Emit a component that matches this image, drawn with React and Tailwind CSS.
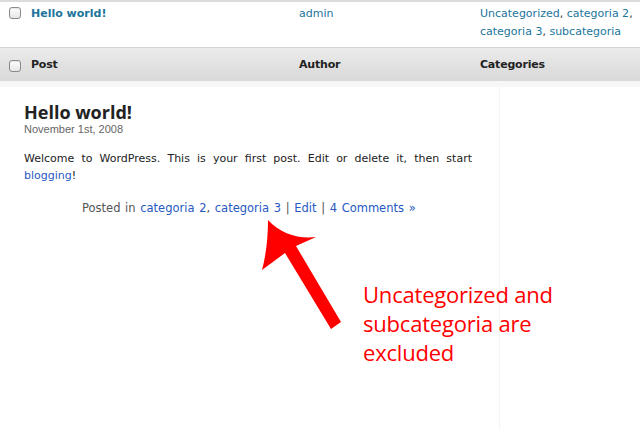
import React from 'react';

const Checkbox = () => (
  <span className="block w-[12px] h-[12px] rounded-[3px] border border-[#8a8a8a] bg-gradient-to-b from-white to-[#e6e6e6] shadow-[inset_0_1px_1px_rgba(0,0,0,0.1)]" />
);

const App = () => {
  return (
    <div className="relative w-[640px] h-[430px] overflow-hidden bg-white font-['DejaVu_Sans',sans-serif]">
      {/* Posts table (admin) */}
      <div className="border-t-2 border-[#dcdcdc]">
        <div className="flex h-[45px] text-[11px]">
          <div className="w-[31px] pl-[9px] pt-[5px]">
            <Checkbox />
          </div>
          <div className="w-[268px] pt-[4px] font-bold text-[#21759b]">Hello world!</div>
          <div className="w-[181px] pt-[4px] text-[#21759b]">admin</div>
          <div className="flex-1 pt-[3px] leading-[18px] text-[#21759b]">
            Uncategorized<span className="text-[#333]">, </span>categoria 2<span className="text-[#333]">,</span>
            <br />
            categoria 3<span className="text-[#333]">, </span>subcategoria
          </div>
        </div>
        <div className="flex items-center h-[34px] pt-[2px] border-t border-[#d4d4d4] bg-gradient-to-b from-[#ebebeb] to-[#d9d9d9] text-[11px] font-bold text-[#222] tracking-[-0.2px]">
          <div className="w-[31px] pl-[9px]">
            <Checkbox />
          </div>
          <div className="w-[268px]">Post</div>
          <div className="w-[181px]">Author</div>
          <div className="flex-1">Categories</div>
        </div>
        <div className="h-[6px] bg-[#f7f7f7]" />
      </div>

      {/* Blog post preview */}
      <div className="w-[500px] h-[344px] border-r border-[#f4f4f4] pl-[24px] pr-[27px]">
        <h2 className="pt-[14px] text-[18px] leading-[22px] font-bold text-[#222] font-['Open_Sans',sans-serif]">
          Hello world!
        </h2>
        <div className="text-[11px] leading-[12px] text-[#666] font-['Liberation_Sans',sans-serif]">
          November 1st, 2008
        </div>
        <div className="mt-[15px] text-[11px] leading-[17px] text-[#222]">
          <p className="text-justify [text-align-last:justify]">
            Welcome to WordPress. This is your first post. Edit or delete it, then start
          </p>
          <p>
            <span className="text-[#2759c2]">blogging</span>!
          </p>
        </div>
        <div className="mt-[16px] pl-[58px] text-[11.5px] leading-[17px] text-[#555] [word-spacing:1px]">
          Posted in <span className="text-[#2759c2]">categoria 2</span>,{' '}
          <span className="text-[#2759c2]">categoria 3</span> |{' '}
          <span className="text-[#2759c2]">Edit</span> |{' '}
          <span className="text-[#2759c2]">4 Comments »</span>
        </div>
      </div>

      {/* Annotation overlay */}
      <svg className="absolute left-0 top-0" width="640" height="430" viewBox="0 0 640 430">
        <path
          d="M268 220 C 281 234 298 239 316 237 L 296 246 L 341 322 L 331 329 L 285 253 L 262 270 C 266 255 268 238 268 220 Z"
          fill="#ff0000"
        />
      </svg>
      <div className="absolute left-[363px] top-[280px] text-[22px] leading-[29px] text-[#ff0000] font-['Open_Sans',sans-serif] tracking-[-0.2px]">
        Uncategorized and
        <br />
        subcategoria are
        <br />
        excluded
      </div>
    </div>
  );
};

export default App;
